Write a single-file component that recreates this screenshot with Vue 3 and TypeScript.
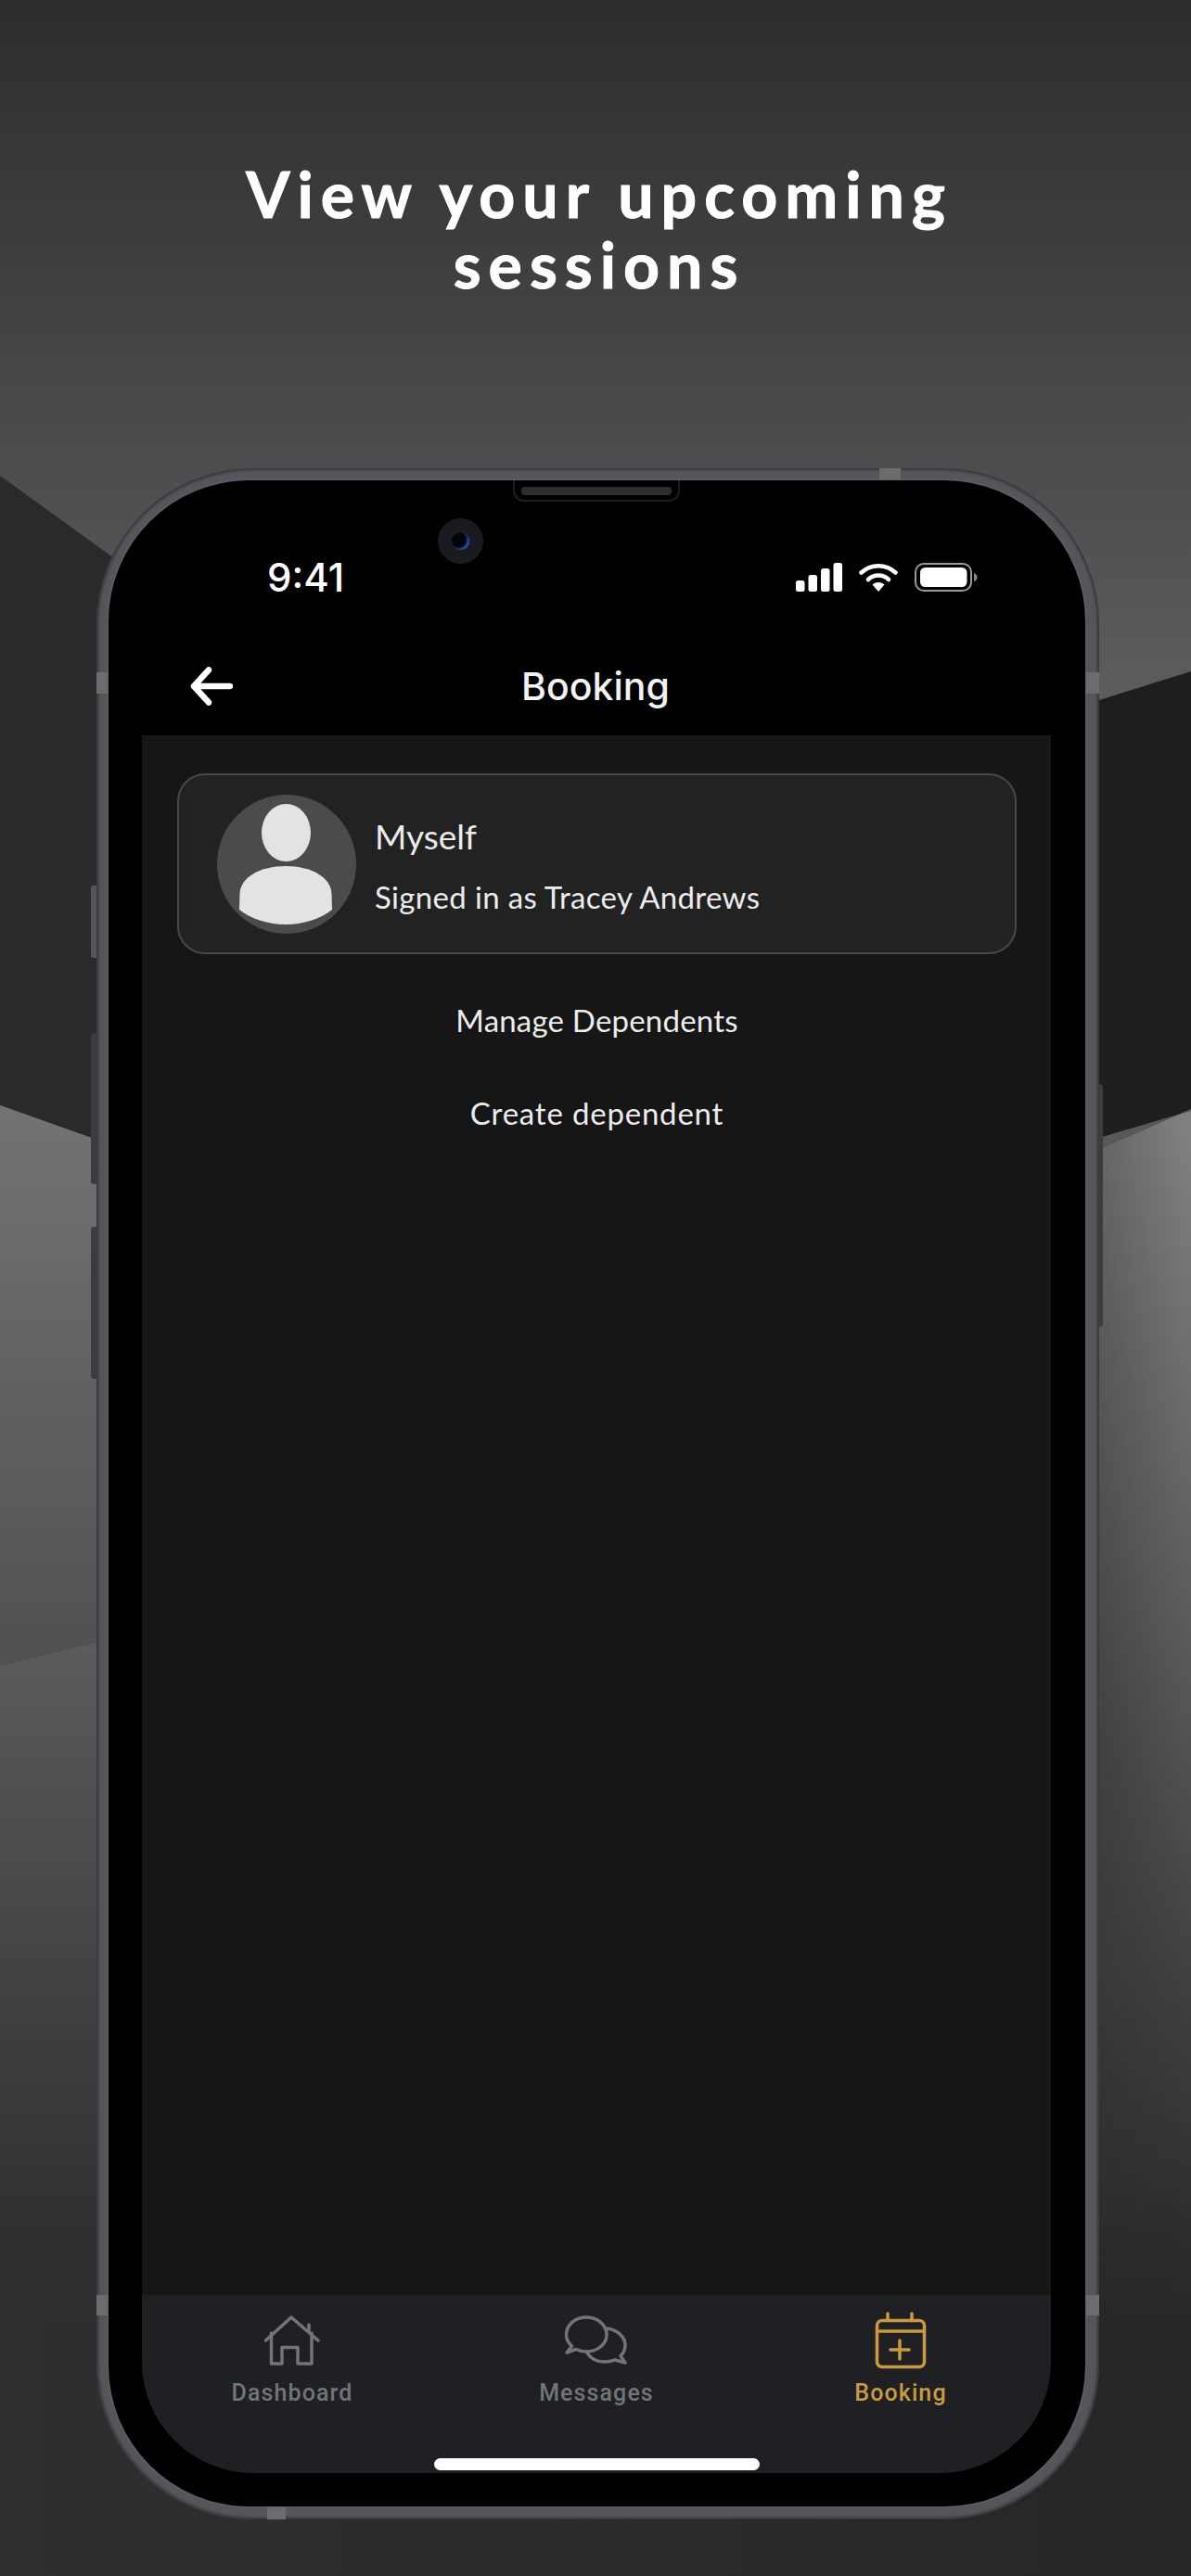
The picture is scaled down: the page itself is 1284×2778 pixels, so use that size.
<script setup lang="ts">
const tabs = [
  { label: 'Dashboard', icon: 'home', active: false },
  { label: 'Messages', icon: 'chat', active: false },
  { label: 'Booking', icon: 'calendar', active: true },
]
</script>

<template>
  <div class="page">
    <svg class="backdrop" width="1284" height="2778" viewBox="0 0 1284 2778" aria-hidden="true">
      <defs>
        <linearGradient id="topG" gradientUnits="userSpaceOnUse" x1="0" y1="0" x2="0" y2="760">
          <stop offset="0" stop-color="#2d2d2d" />
          <stop offset="1" stop-color="#5d5d5d" />
        </linearGradient>
        <linearGradient id="midL" gradientUnits="userSpaceOnUse" x1="0" y1="1190" x2="0" y2="1800">
          <stop offset="0" stop-color="#737373" />
          <stop offset="1" stop-color="#505050" />
        </linearGradient>
        <linearGradient id="lowL" gradientUnits="userSpaceOnUse" x1="0" y1="1770" x2="0" y2="2420">
          <stop offset="0" stop-color="#5b5b5b" />
          <stop offset="1" stop-color="#2f2f2f" />
        </linearGradient>
        <linearGradient id="lowR" gradientUnits="userSpaceOnUse" x1="0" y1="1210" x2="0" y2="2520">
          <stop offset="0" stop-color="#808080" />
          <stop offset="1" stop-color="#262626" />
        </linearGradient>
        <linearGradient id="shade" gradientUnits="userSpaceOnUse" x1="1185" y1="0" x2="1275" y2="0">
          <stop offset="0" stop-color="#000" stop-opacity=".2" />
          <stop offset="1" stop-color="#000" stop-opacity="0" />
        </linearGradient>
        <linearGradient id="fadeG" gradientUnits="userSpaceOnUse" x1="0" y1="1900" x2="0" y2="2500">
          <stop offset="0" stop-color="#fff" />
          <stop offset="1" stop-color="#000" />
        </linearGradient>
        <mask id="fade" maskUnits="userSpaceOnUse" x="1100" y="1100" width="184" height="1678">
          <rect x="1100" y="1100" width="184" height="1678" fill="url(#fadeG)" />
        </mask>
        <linearGradient id="foot" gradientUnits="userSpaceOnUse" x1="0" y1="0" x2="1284" y2="0">
          <stop offset="0" stop-color="#2f2f2f" />
          <stop offset="1" stop-color="#262626" />
        </linearGradient>
      </defs>
      <rect width="1284" height="1300" fill="url(#topG)" />
      <polygon points="0,513 123,602 640,900 640,1400 104,1229 0,1192" fill="#2a2a2a" />
      <polygon points="1284,724 1185,755 640,900 640,1400 1189,1226 1284,1198" fill="#1e1e1e" />
      <polygon points="0,1192 104,1229 640,1400 640,1600 104,1771 0,1796" fill="url(#midL)" />
      <polygon points="0,1796 104,1771 640,1600 640,2778 0,2778" fill="url(#lowL)" />
      <polygon points="1284,1196 1189,1238 640,1400 640,2778 1284,2778" fill="url(#lowR)" />
      <polygon points="1189,1226 1284,1198 1284,1196 1189,1238" fill="#585858" />
      <polygon points="1185,1240 1284,1196 1284,2600 1185,2600" fill="url(#shade)" mask="url(#fade)" />
      <rect y="2500" width="1284" height="278" fill="url(#foot)" />
    </svg>

    <h1 class="headline">View your upcoming<br />sessions</h1>

    <div class="phone">
      <span class="band band-top"></span>
      <span class="band band-left band-high"></span>
      <span class="band band-right band-high"></span>
      <span class="band band-left band-low"></span>
      <span class="band band-right band-low"></span>
      <span class="band band-bottom"></span>
      <span class="side side-silent"></span>
      <span class="side side-up"></span>
      <span class="side side-down"></span>
      <span class="side side-power"></span>

      <div class="bezel">
        <div class="speaker"><span class="speaker-bar"></span></div>
        <div class="camera"><span class="lens"></span></div>

        <div class="status">
          <span class="time">9:41</span>
          <div class="status-icons">
            <svg width="50" height="31" viewBox="0 0 50 31">
              <rect x="0" y="19" width="9.5" height="12" rx="2.5" fill="#fff" />
              <rect x="13.5" y="13" width="9.5" height="18" rx="2.5" fill="#fff" />
              <rect x="27" y="6" width="9.5" height="25" rx="2.5" fill="#fff" />
              <rect x="40.5" y="0" width="9.5" height="31" rx="2.5" fill="#fff" />
            </svg>
            <svg width="42" height="31" viewBox="0 0 42 31">
              <path d="M2.5 10.5 A27 27 0 0 1 39.5 10.5" fill="none" stroke="#fff" stroke-width="4.5" stroke-linecap="round" />
              <path d="M10 18 A16 16 0 0 1 32 18" fill="none" stroke="#fff" stroke-width="4.5" stroke-linecap="round" />
              <path d="M14.5 23.5 A10 10 0 0 1 27.5 23.5 L21 31 Z" fill="#fff" />
            </svg>
            <svg width="68" height="31" viewBox="0 0 68 31">
              <rect x="1" y="1" width="60" height="29" rx="9" fill="none" stroke="#9a9a9a" stroke-width="2" />
              <rect x="6" y="5" width="50.5" height="21" rx="5.5" fill="#fff" />
              <path d="M64 11 C66.5 12 67.5 13.5 67.5 15.5 C67.5 17.5 66.5 19 64 20 Z" fill="#8a8a8a" />
            </svg>
          </div>
        </div>

        <header class="app-bar">
          <svg class="back" width="48" height="48" viewBox="0 0 48 48">
            <path d="M45 24 H6 M22 6.5 L6 24 L22 41.5" fill="none" stroke="#fff" stroke-width="6.5" stroke-linecap="round" stroke-linejoin="round" />
          </svg>
          <span class="app-title">Booking</span>
        </header>

        <main class="screen">
          <section class="card">
            <svg class="avatar" width="150" height="150" viewBox="0 0 150 150">
              <circle cx="75" cy="75" r="75" fill="#4b4b4b" />
              <ellipse cx="74.5" cy="41" rx="26.5" ry="31" fill="#e3e3e3" />
              <path d="M24 124 L24.5 106 C26 89 46 77 74 77 C102 77 122 89 123.5 106 L124 124 C112 134 92 140 74 140 C56 140 36 134 24 124 Z" fill="#e3e3e3" />
            </svg>
            <div class="who">
              <span class="who-name">Myself</span>
              <span class="who-sub">Signed in as Tracey Andrews</span>
            </div>
          </section>
          <a class="link link-manage">Manage Dependents</a>
          <a class="link link-create">Create dependent</a>
        </main>

        <nav class="tabs">
          <div v-for="tab in tabs" :key="tab.label" class="tab" :class="{ active: tab.active }">
            <span class="tab-icon">
              <svg v-if="tab.icon === 'home'" width="60" height="56" viewBox="0 0 60 56" fill="none" stroke="currentColor" stroke-width="3.5">
                <path d="M1.5 28 L29 3 L58 28 M48 11 V19 M7.5 20 V53 H19 V35.5 H36 V53 H51 V20" stroke-linejoin="round" stroke-linecap="round" />
              </svg>
              <svg v-else-if="tab.icon === 'chat'" width="70" height="56" viewBox="0 0 70 56" fill="none" stroke="currentColor" stroke-width="3.5" stroke-linejoin="round" stroke-linecap="round">
                <path d="M3 41 L8.5 34 C4.5 30.5 2.5 26.5 2.5 22 C2.5 11 12 3 24 3 C36 3 46 11 46 22 C46 32 36 40 24 40 C20 40 16 39 13 37.5 Z" />
                <path d="M46 15 C56 16 66 23 66 33 C66 38 64 42 61 44.5 L66 52 L55 49 C51 50.5 47 51 43 51 C35 51 28 47 25 41" />
              </svg>
              <svg v-else width="58" height="62" viewBox="0 0 58 62" fill="none" stroke="currentColor" stroke-width="3.5" stroke-linecap="round">
                <rect x="3.5" y="9.5" width="51" height="50" rx="5.5" />
                <path d="M3.5 21 H54.5 M15 2 V9 M41 2 V9 M28 31 V51 M18 41 H38" />
              </svg>
            </span>
            <span class="tab-label">{{ tab.label }}</span>
          </div>
          <span class="home-bar"></span>
        </nav>
      </div>
    </div>
  </div>
</template>

<style scoped>
.page {
  position: relative;
  width: 1284px;
  height: 2778px;
  overflow: hidden;
  display: flex;
  flex-direction: column;
  background: #2e2e2e;
}
.backdrop {
  position: absolute;
  inset: 0;
}
.headline {
  position: relative;
  height: 505px;
  box-sizing: border-box;
  margin: 0;
  padding: 171px 0 0 8px;
  text-align: center;
  font-family: Lato, sans-serif;
  font-weight: 700;
  font-size: 68px;
  line-height: 76px;
  letter-spacing: 8px;
  -webkit-text-stroke: 1px #fff;
  color: #fff;
}
.phone {
  position: relative;
  width: 1081px;
  height: 2212px;
  margin-left: 104px;
  box-sizing: border-box;
  padding: 13px 15px 14px 13px;
  border-radius: 168px;
  background: #55565b;
  box-shadow: inset 0 0 3px 2px #34363b;
}
.band {
  position: absolute;
  background: #6b6c70;
}
.band-top {
  left: 844px;
  top: 0;
  width: 23px;
  height: 14px;
}
.band-bottom {
  left: 184px;
  bottom: 0;
  width: 20px;
  height: 14px;
}
.band-left {
  left: 0;
  width: 13px;
}
.band-right {
  right: 0;
  width: 15px;
}
.band-high {
  top: 220px;
  height: 23px;
}
.band-low {
  top: 1970px;
  height: 22px;
}
.side {
  position: absolute;
  background: #3a3c41;
}
.side-silent,
.side-up,
.side-down {
  left: -6px;
  width: 6px;
  border-radius: 3px 0 0 3px;
}
.side-silent {
  top: 450px;
  height: 78px;
  background: #55565a;
}
.side-up {
  top: 609px;
  height: 163px;
}
.side-down {
  top: 818px;
  height: 164px;
}
.side-power {
  right: -4px;
  top: 664px;
  width: 4px;
  height: 262px;
  border-radius: 0 3px 3px 0;
}
.bezel {
  position: relative;
  display: flex;
  flex-direction: column;
  height: 100%;
  box-sizing: border-box;
  padding: 0 37px 36px 36px;
  border-radius: 152px;
  background: #000;
  box-shadow: 0 0 2px 1px #626368;
}
.speaker {
  position: absolute;
  left: 436px;
  top: 0;
  box-sizing: border-box;
  width: 180px;
  height: 23px;
  padding: 7px 7px 0;
  border: 2px solid #1b1c20;
  border-top: 0;
  border-radius: 0 0 12px 12px;
}
.speaker-bar {
  display: block;
  height: 9px;
  border-radius: 4px;
  background: #2c2d30;
}
.camera {
  position: absolute;
  left: 355px;
  top: 41px;
  display: flex;
  align-items: center;
  justify-content: center;
  width: 49px;
  height: 49px;
  border-radius: 50%;
  background: #191b21;
}
.lens {
  width: 19px;
  height: 19px;
  border-radius: 50%;
  background: radial-gradient(circle at 38% 42%, #05060c 48%, #2a62e0 74%, #0d2468 100%);
}
.status {
  display: flex;
  align-items: center;
  justify-content: space-between;
  height: 31px;
  padding: 89px 79px 0 135px;
  flex: none;
}
.time {
  font-family: Inter, sans-serif;
  font-weight: 500;
  font-size: 42px;
  line-height: 31px;
  color: #fff;
}
.status-icons {
  display: flex;
  align-items: center;
  gap: 18px;
}
.status-icons svg {
  display: block;
}
.app-bar {
  display: grid;
  grid-template-columns: 1fr auto 1fr;
  align-items: center;
  height: 64px;
  padding: 70px 52px 21px 50px;
  flex: none;
}
.back {
  display: block;
}
.app-title {
  font-family: Inter, sans-serif;
  font-weight: 500;
  font-size: 41px;
  line-height: 48px;
  color: #f2f2f2;
}
.screen {
  flex: 1;
  display: flex;
  flex-direction: column;
  padding: 41px 37px 0 38px;
  background: #161616;
  color: #ececec;
  font-family: Lato, sans-serif;
}
.card {
  display: flex;
  align-items: center;
  gap: 20px;
  height: 195px;
  box-sizing: border-box;
  padding: 0 41px;
  border: 2px solid #47484a;
  border-radius: 30px;
  background: #222;
}
.avatar {
  display: block;
  flex: none;
}
.who {
  display: flex;
  flex-direction: column;
  gap: 23px;
  padding-top: 4px;
}
.who-name {
  font-size: 37px;
  line-height: 44px;
}
.who-sub {
  font-size: 33px;
  line-height: 40px;
  letter-spacing: 0.33px;
}
.link {
  align-self: center;
  font-size: 33px;
  line-height: 40px;
}
.link-manage {
  margin-top: 51px;
  letter-spacing: 0.2px;
}
.link-create {
  margin-top: 60px;
  letter-spacing: 0.8px;
}
.tabs {
  position: relative;
  display: grid;
  grid-template-columns: repeat(3, 328px);
  height: 192px;
  box-sizing: border-box;
  margin: 0;
  padding: 18px 0 0;
  border-radius: 0 0 120px 120px;
  background: #1f2024;
  flex: none;
  justify-content: center;
}
.tab {
  display: flex;
  flex-direction: column;
  align-items: center;
  color: #737478;
}
.tab.active {
  color: #c99a3f;
}
.tab-icon {
  display: flex;
  align-items: center;
  justify-content: center;
  height: 62px;
}
.tab-label {
  margin-top: 11px;
  font-family: Roboto, sans-serif;
  font-size: 25px;
  font-weight: 500;
  line-height: 30px;
  letter-spacing: 1.1px;
}
.home-bar {
  position: absolute;
  left: 315px;
  bottom: 3px;
  width: 351px;
  height: 13px;
  border-radius: 7px;
  background: #fff;
}
</style>
